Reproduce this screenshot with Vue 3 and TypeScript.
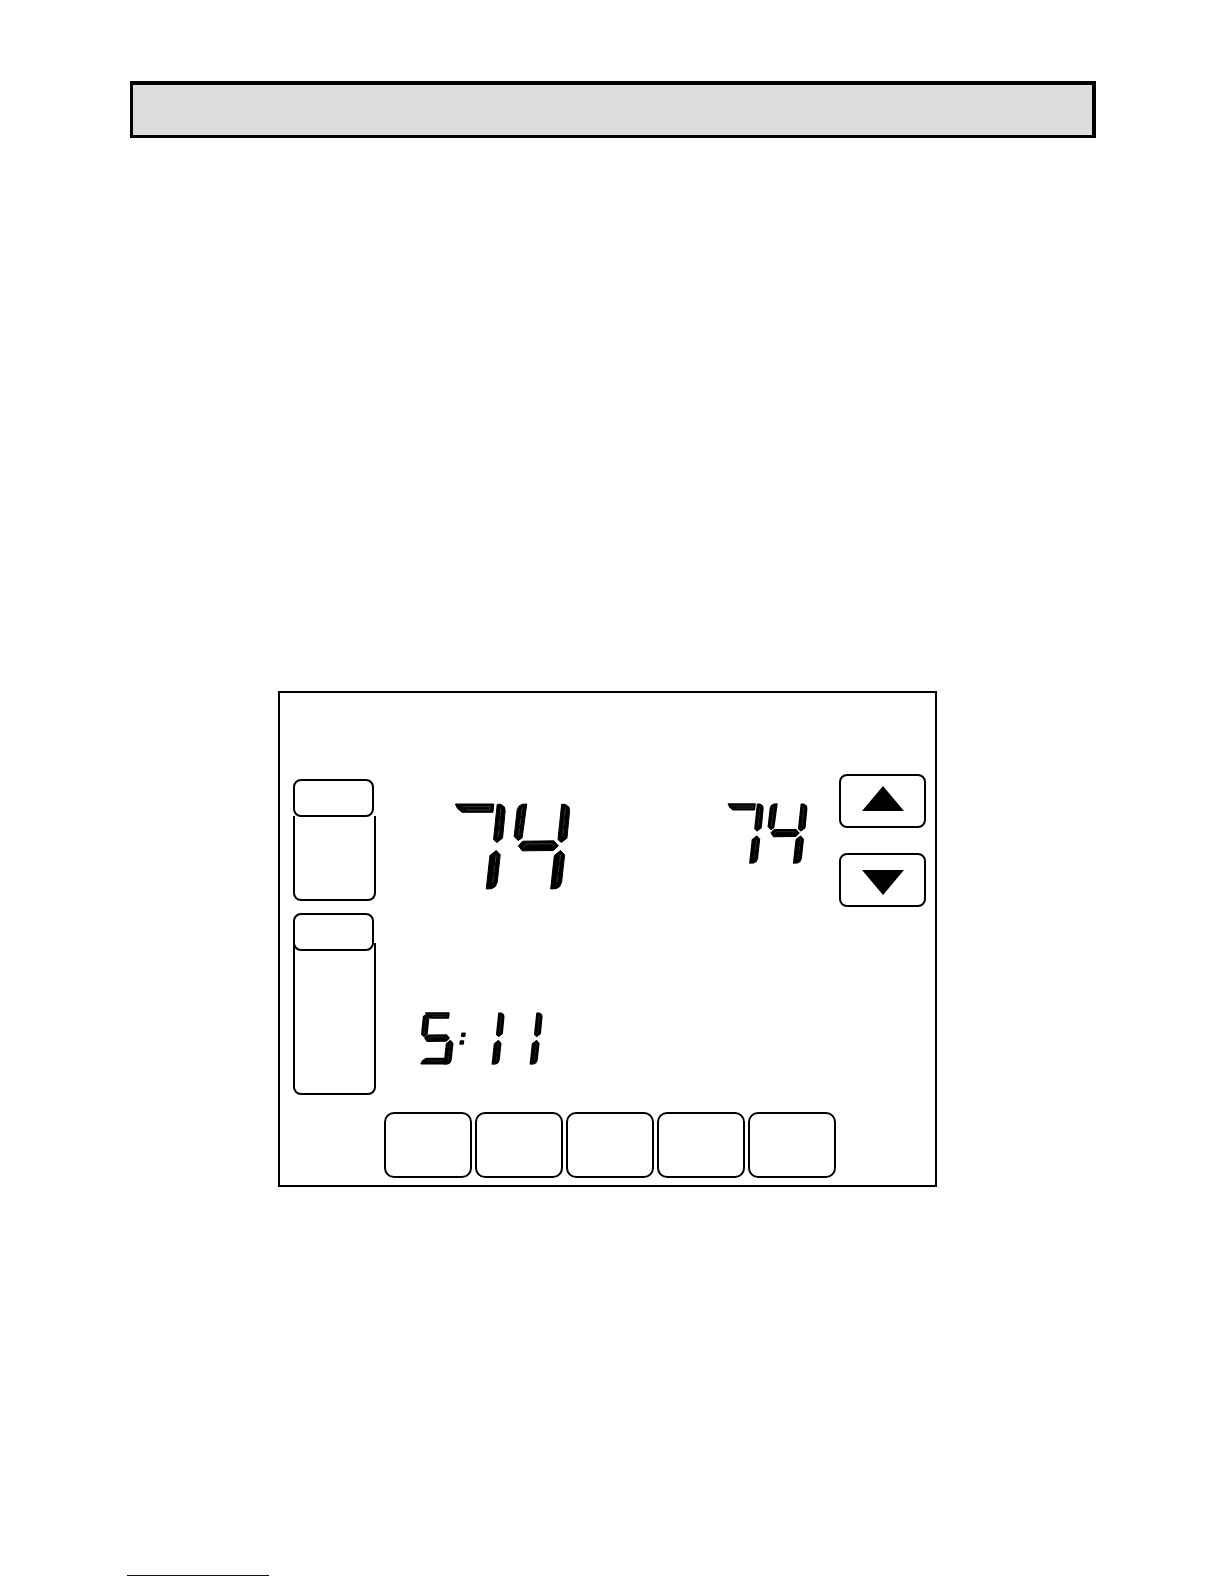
<script setup lang="ts">
type Segment = { shape: string; shine: string }
type Digit = { x: number; on: string[] }
type Readout = { name: string; label: string; width: number; digits: Digit[] }

// Segments of one slanted LCD cell, 170 x 256 units
const segments: Record<string, Segment> = {
  top: { shape: '19,0 135,0 132,25 39,25 25,13', shine: '38,8 124,8 123,18 50,18' },
  upperRight: { shape: '145,1 156,1 167,9 169,20 161,103 144,116 134,107', shine: '156,14 148,103' },
  lowerRight: { shape: '142,140 154,153 145,236 139,249 128,255 112,256 123,155', shine: '142,153 130,243' },
  upperLeft: { shape: '40,0 26,1 16,7 11,18 2,98 14,110 26,102', shine: '26,13 15,98' },
  middle: { shape: '15,126 28,112 122,111 135,126 120,140 26,141', shine: '30,131 37,120 116,120 124,130' },
  bottom: { shape: '-4,254 3,240 22,228 114,228 110,255 -2,255', shine: '24,240 102,240' },
  mitredLeft: { shape: '8,18 15,13 32,30 25,103 10,117 -1,106', shine: '20,30 12,103' },
}

const seven = ['top', 'upperRight', 'lowerRight']
const four = ['upperLeft', 'middle', 'upperRight', 'lowerRight']
const five = ['top', 'mitredLeft', 'middle', 'lowerRight', 'bottom']
const one = ['upperRight', 'lowerRight']

const temperatures: Readout[] = [
  { name: 'room', label: '74', width: 364, digits: [{ x: 0, on: seven }, { x: 194, on: four }] },
  { name: 'target', label: '74', width: 360, digits: [{ x: 0, on: seven }, { x: 190, on: four }] },
]
const clock: Readout = {
  name: 'clock',
  label: '5:11',
  width: 602,
  digits: [{ x: 0, on: five }, { x: 241, on: one }, { x: 432, on: one }],
}
const modes = [
  { name: 'System', size: 'short' },
  { name: 'Fan', size: 'tall' },
]
const arrows = [
  { name: 'Raise temperature', points: '0,25 21,0 42,25' },
  { name: 'Lower temperature', points: '0,5 42,5 21,30' },
]
const keys = [1, 2, 3, 4, 5]
</script>

<template>
  <main class="page">
    <header class="banner"></header>

    <section class="panel">
      <div class="body">
        <div class="modes">
          <div v-for="mode in modes" :key="mode.name" class="mode">
            <button type="button" class="key mode-key" :aria-label="mode.name"></button>
            <div class="tray" :class="mode.size"></div>
          </div>
        </div>

        <div class="display">
          <div class="temperatures">
            <svg
              v-for="r in temperatures"
              :key="r.name"
              :class="['readout', r.name]"
              :viewBox="`0 0 ${r.width} 256`"
              role="img"
              :aria-label="r.label"
            >
              <g v-for="d in r.digits" :key="d.x" :transform="`translate(${d.x} 0)`">
                <template v-for="s in d.on" :key="s">
                  <polygon :points="segments[s].shape" />
                  <polyline :class="['shine', s]" :points="segments[s].shine" />
                </template>
              </g>
            </svg>
          </div>
          <svg
            :class="['readout', clock.name]"
            :viewBox="`0 0 ${clock.width} 256`"
            role="img"
            :aria-label="clock.label"
          >
            <g v-for="d in clock.digits" :key="d.x" :transform="`translate(${d.x} 0)`">
              <template v-for="s in d.on" :key="s">
                <polygon :points="segments[s].shape" />
                <polyline :class="['shine', s]" :points="segments[s].shine" />
              </template>
            </g>
            <polygon points="201,102 216,102 214,116 199,116" />
            <polygon points="193,141 208,141 206,155 191,155" />
          </svg>
        </div>

        <div class="arrows">
          <button v-for="a in arrows" :key="a.name" type="button" class="key arrow" :aria-label="a.name">
            <svg viewBox="0 0 42 30" aria-hidden="true"><polygon :points="a.points" /></svg>
          </button>
        </div>
      </div>

      <div class="keys">
        <button v-for="k in keys" :key="k" type="button" class="key soft" :aria-label="`Key ${k}`"></button>
      </div>
    </section>

    <footer class="footer">
      <a class="link" href="#" aria-label="Website"></a>
    </footer>
  </main>
</template>

<style>
body {
  margin: 0;
  background: #fff;
}
</style>

<style scoped>
.page {
  box-sizing: border-box;
  padding: 81px 128px 8px 130px;
  font-family: "Liberation Sans", Arial, sans-serif;
}
.banner {
  box-sizing: border-box;
  height: 57px;
  border: solid #000;
  border-width: 4px 4px 3px 3px;
  background: #ddd;
}
.panel {
  box-sizing: border-box;
  margin: 553px 159px 0 148px;
  padding-bottom: 7px;
  border: 2px solid #000;
}
.body {
  display: flex;
  align-items: flex-start;
  padding: 81px 9px 0 13px;
}
.key {
  box-sizing: border-box;
  display: block;
  padding: 0;
  border: 2px solid #000;
  border-radius: 8px;
  background: #fff;
}
.modes {
  display: flex;
  flex-direction: column;
  gap: 12px;
  width: 83px;
  padding-top: 5px;
}
.mode-key {
  position: relative;
  width: 81px;
  height: 38px;
}
.tray {
  box-sizing: border-box;
  width: 83px;
  border: 2px solid #000;
  border-top: 0;
  border-radius: 0 0 8px 8px;
}
.short {
  height: 85px;
  margin-top: -1px;
}
.tall {
  height: 152px;
  margin-top: -8px;
}
.display {
  flex: 1;
  padding-top: 30px;
}
.temperatures {
  display: flex;
  justify-content: space-between;
  align-items: flex-start;
  padding: 0 32px 0 73px;
}
.readout {
  display: block;
  overflow: visible;
}
.readout polygon {
  stroke: #000;
  stroke-width: 3;
  stroke-linejoin: round;
}
.room {
  width: 121px;
  height: 85px;
}
.target {
  width: 83px;
  height: 59px;
}
.target polygon {
  stroke-width: 6;
}
.clock {
  width: 120px;
  height: 51px;
  margin: 124px 0 0 46px;
}
.clock polygon {
  stroke-width: 8;
}
.shine {
  fill: none;
  stroke: #555;
  stroke-width: 2;
  stroke-dasharray: 24 6;
}
.top,
.middle,
.bottom {
  stroke-dasharray: none;
}
.arrows {
  display: flex;
  flex-direction: column;
  gap: 25px;
}
.arrow {
  display: flex;
  align-items: center;
  justify-content: center;
  width: 87px;
  height: 54px;
}
.arrow svg {
  width: 42px;
  height: 30px;
}
.keys {
  display: flex;
  gap: 3px;
  margin-top: 17px;
  padding: 0 99px 0 104px;
}
.soft {
  flex: 1;
  height: 66px;
  border-radius: 10px;
}
.footer {
  display: flex;
  margin: 380px 0 0 -3px;
}
.link {
  width: 142px;
  height: 8px;
  border-bottom: 1px solid #000090;
}
</style>
